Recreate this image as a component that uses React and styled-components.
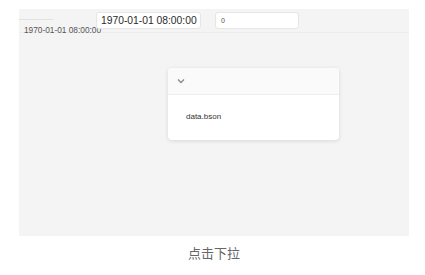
import React from 'react'
import styled, { createGlobalStyle } from 'styled-components'

const GlobalStyle = createGlobalStyle`
  body {
    margin: 0;
    padding: 0;
    background: #fff;
    font-family: 'Liberation Sans', Arial, sans-serif;
  }
`

const Page = styled.div`
  padding: 9px 16px 0 19px;
  width: 425px;
  box-sizing: border-box;
`

const Panel = styled.div`
  width: 390px;
  height: 227px;
  background: #f4f4f4;
  display: flex;
  flex-direction: column;
`

const TopBar = styled.div`
  height: 23px;
  border-bottom: 1px solid #ebebeb;
  display: flex;
  align-items: flex-start;
`

const LabelCell = styled.div`
  width: 77px;
  flex-shrink: 0;
  height: 23px;
`

const Track = styled.div`
  margin-top: 10px;
  width: 34px;
  height: 1px;
  background: #e2e2e2;
`

const SmallTime = styled.div`
  margin: 6px 0 0 5px;
  font-size: 8.3px;
  line-height: 9px;
  color: #555;
  white-space: nowrap;
`

const Field = styled.div`
  margin-top: 3px;
  margin-left: ${p => p.$gap || 0}px;
  width: ${p => p.$w}px;
  height: 17px;
  box-sizing: border-box;
  background: #fff;
  border: 1px solid #e6e6e6;
  border-radius: 3px;
  padding-left: ${p => p.$pad}px;
  font-size: ${p => p.$size}px;
  line-height: 15px;
  color: ${p => p.$color};
  white-space: nowrap;
`

const Body = styled.div`
  flex: 1;
  display: flex;
  justify-content: flex-start;
  padding: 35px 0 0 149px;
`

const Card = styled.div`
  width: 171px;
  height: 72px;
  background: #fff;
  border-radius: 4px;
  box-shadow: 0 1px 4px rgba(0, 0, 0, 0.12);
  overflow: hidden;
  display: flex;
  flex-direction: column;
`

const CardHead = styled.div`
  height: 26px;
  background: #fafafa;
  border-bottom: 1px solid #ededed;
  display: flex;
  align-items: center;
  padding-left: 9px;
`

const CardBody = styled.div`
  padding: 17px 0 0 18px;
  font-size: 8px;
  color: #333;
`

const Caption = styled.div`
  width: 390px;
  text-align: center;
  margin-top: 7px;
  font-family: 'Noto Sans CJK SC', sans-serif;
  font-size: 13px;
  color: #666;
`

export default function App() {
  return (
    <>
      <GlobalStyle />
      <Page>
        <Panel>
          <TopBar>
            <LabelCell>
              <Track />
              <SmallTime>1970-01-01 08:00:00</SmallTime>
            </LabelCell>
            <Field $w={105} $pad={4} $size={10.3} $color="#2a2a2a">1970-01-01 08:00:00</Field>
            <Field $gap={14} $w={84} $pad={5} $size={7} $color="#555">0</Field>
          </TopBar>
          <Body>
            <Card>
              <CardHead>
                <svg width="8" height="6" viewBox="0 0 8 6">
                  <path d="M1 1.5 L4 4.5 L7 1.5" fill="none" stroke="#8a8a8a" strokeWidth="1.3" />
                </svg>
              </CardHead>
              <CardBody>data.bson</CardBody>
            </Card>
          </Body>
        </Panel>
        <Caption>点击下拉</Caption>
      </Page>
    </>
  )
}
